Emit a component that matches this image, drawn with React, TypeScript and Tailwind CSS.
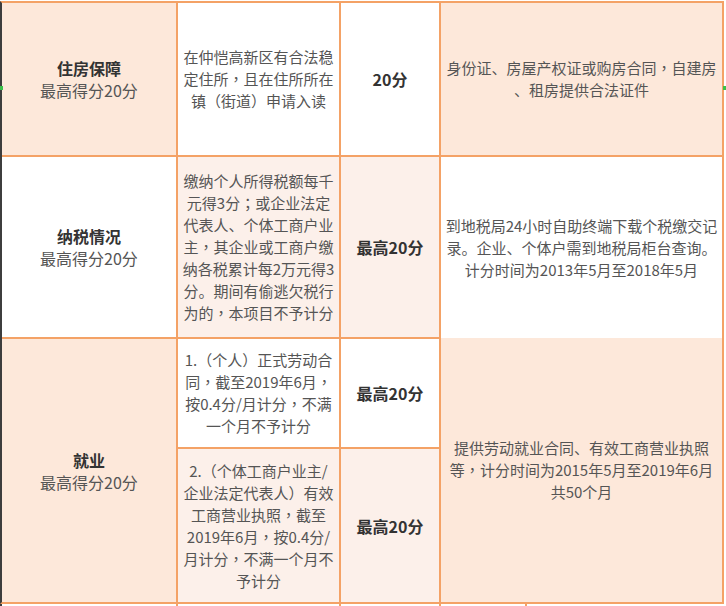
import React from "react";

const font = { fontFamily: '"Noto Sans CJK SC", "Noto Sans", sans-serif' };

function Punct({ s }: { s: string }) {
  const parts = s.split(/([，；])/);
  return (
    <>
      {parts.map((p, i) =>
        p === "，" || p === "；" ? (
          <span key={i} style={{ fontFamily: '"Noto Sans CJK TC", sans-serif' }}>
            {p}
          </span>
        ) : (
          <React.Fragment key={i}>{p}</React.Fragment>
        )
      )}
    </>
  );
}

function Lines({ lines, className = "" }: { lines: string[]; className?: string }) {
  return (
    <div className={"flex flex-col items-center text-center " + className}>
      {lines.map((l, i) => (
        <div key={i} className="whitespace-nowrap">
          <Punct s={l} />
        </div>
      ))}
    </div>
  );
}

function Title({ t }: { t: string }) {
  return (
    <div className="flex flex-col items-center leading-[22px]">
      <div className="text-[16px] font-bold text-[#333333]">{t}</div>
      <div className="text-[16px] text-[#555555]">最高得分20分</div>
    </div>
  );
}

const cell = "flex items-center justify-center overflow-hidden";
const body = "text-[15px] leading-[22px] text-[#555555]";
const score = "text-[16px] font-bold text-[#333333]";

export default function App() {
  return (
    <div className="relative w-[726px] h-[606px] bg-white pt-px" style={font}>
      <div className="grid w-[724px] grid-cols-[174px_161px_98px_281px] grid-rows-[152px_180px_108px_153px] gap-[2px] bg-[#f4a266] border-t-2 border-r-2 border-b-2 border-t-[#f4a266] border-r-[#f4a266] border-b-[#f4a266] border-l-2 border-l-[#3d3d3d]">
        {/* Row 1 */}
        <div className={cell + " col-start-1 row-start-1 bg-[#fde8da]"}>
          <Title t="住房保障" />
        </div>
        <div className={cell + " col-start-2 row-start-1 bg-white"}>
          <Lines className={body} lines={["在仲恺高新区有合法稳", "定住所，且在住所所在", "镇（街道）申请入读"]} />
        </div>
        <div className={cell + " col-start-3 row-start-1 bg-white"}>
          <span className={score}>20分</span>
        </div>
        <div className={cell + " col-start-4 row-start-1 bg-[#fde8da]"}>
          <Lines className={body + " leading-[20px]"} lines={["身份证、房屋产权证或购房合同，自建房", "、租房提供合法证件"]} />
        </div>

        {/* Row 2 */}
        <div className={cell + " col-start-1 row-start-2 bg-white"}>
          <Title t="纳税情况" />
        </div>
        <div className={cell + " col-start-2 row-start-2 bg-[#fcf0ea]"}>
          <Lines
            className={body + " leading-[21.8px]"}
            lines={[
              "缴纳个人所得税额每千",
              "元得3分；或企业法定",
              "代表人、个体工商户业",
              "主，其企业或工商户缴",
              "纳各税累计每2万元得3",
              "分。期间有偷逃欠税行",
              "为的，本项目不予计分",
            ]}
          />
        </div>
        <div className={cell + " col-start-3 row-start-2 bg-[#fcf0ea]"}>
          <span className={score}>最高20分</span>
        </div>
        <div className="col-start-4 row-start-2 row-span-3 flex flex-col">
          <div className={cell + " h-[181px] shrink-0 bg-white"}>
            <Lines
              className={body + " leading-[21px]"}
              lines={["到地税局24小时自助终端下载个税缴交记", "录。企业、个体户需到地税局柜台查询。", "计分时间为2013年5月至2018年5月"]}
            />
          </div>
          <div className={cell + " flex-1 bg-[#fde8da]"}>
            <Lines
              className={body}
              lines={["提供劳动就业合同、有效工商营业执照", "等，计分时间为2015年5月至2019年6月", "共50个月"]}
            />
          </div>
        </div>

        {/* Row 3 */}
        <div className={cell + " col-start-1 row-start-3 row-span-2 bg-[#fde8da]"}>
          <Title t="就业" />
        </div>
        <div className={cell + " col-start-2 row-start-3 bg-white"}>
          <Lines
            className={body + " leading-[21.8px]"}
            lines={["1.（个人）正式劳动合", "同，截至2019年6月，", "按0.4分/月计分，不满", "一个月不予计分"]}
          />
        </div>
        <div className={cell + " col-start-3 row-start-3 bg-white"}>
          <span className={score}>最高20分</span>
        </div>
        <div className={cell + " col-start-2 row-start-4 bg-[#fcf0ea]"}>
          <Lines
            className={body + " leading-[21.8px]"}
            lines={["2.（个体工商户业主/", "企业法定代表人）有效", "工商营业执照，截至", "2019年6月，按0.4分/", "月计分，不满一个月不", "予计分"]}
          />
        </div>
        <div className={cell + " col-start-3 row-start-4 bg-[#fcf0ea]"}>
          <span className={score}>最高20分</span>
        </div>
      </div>

      {/* next row stub */}
      <div className="flex h-[2px] w-[724px] border-l-2 border-l-[#3d3d3d] bg-white">
        <div className="w-[174px]" />
        <div className="w-[2px] bg-[#f4a266]" />
        <div className="w-[161px]" />
        <div className="w-[2px] bg-[#f4a266]" />
        <div className="w-[98px]" />
        <div className="w-[2px] bg-[#f4a266]" />
        <div className="w-[84px]" />
        <div className="w-[2px] bg-[#f4a266]" />
      </div>

      {/* small green markers */}
      <div className="absolute left-0 top-[86px] h-[4px] w-[3px] bg-[#3cc04a]" />
      <div className="absolute left-[723px] top-[86px] h-[4px] w-[3px] bg-[#3cc04a]" />
    </div>
  );
}
